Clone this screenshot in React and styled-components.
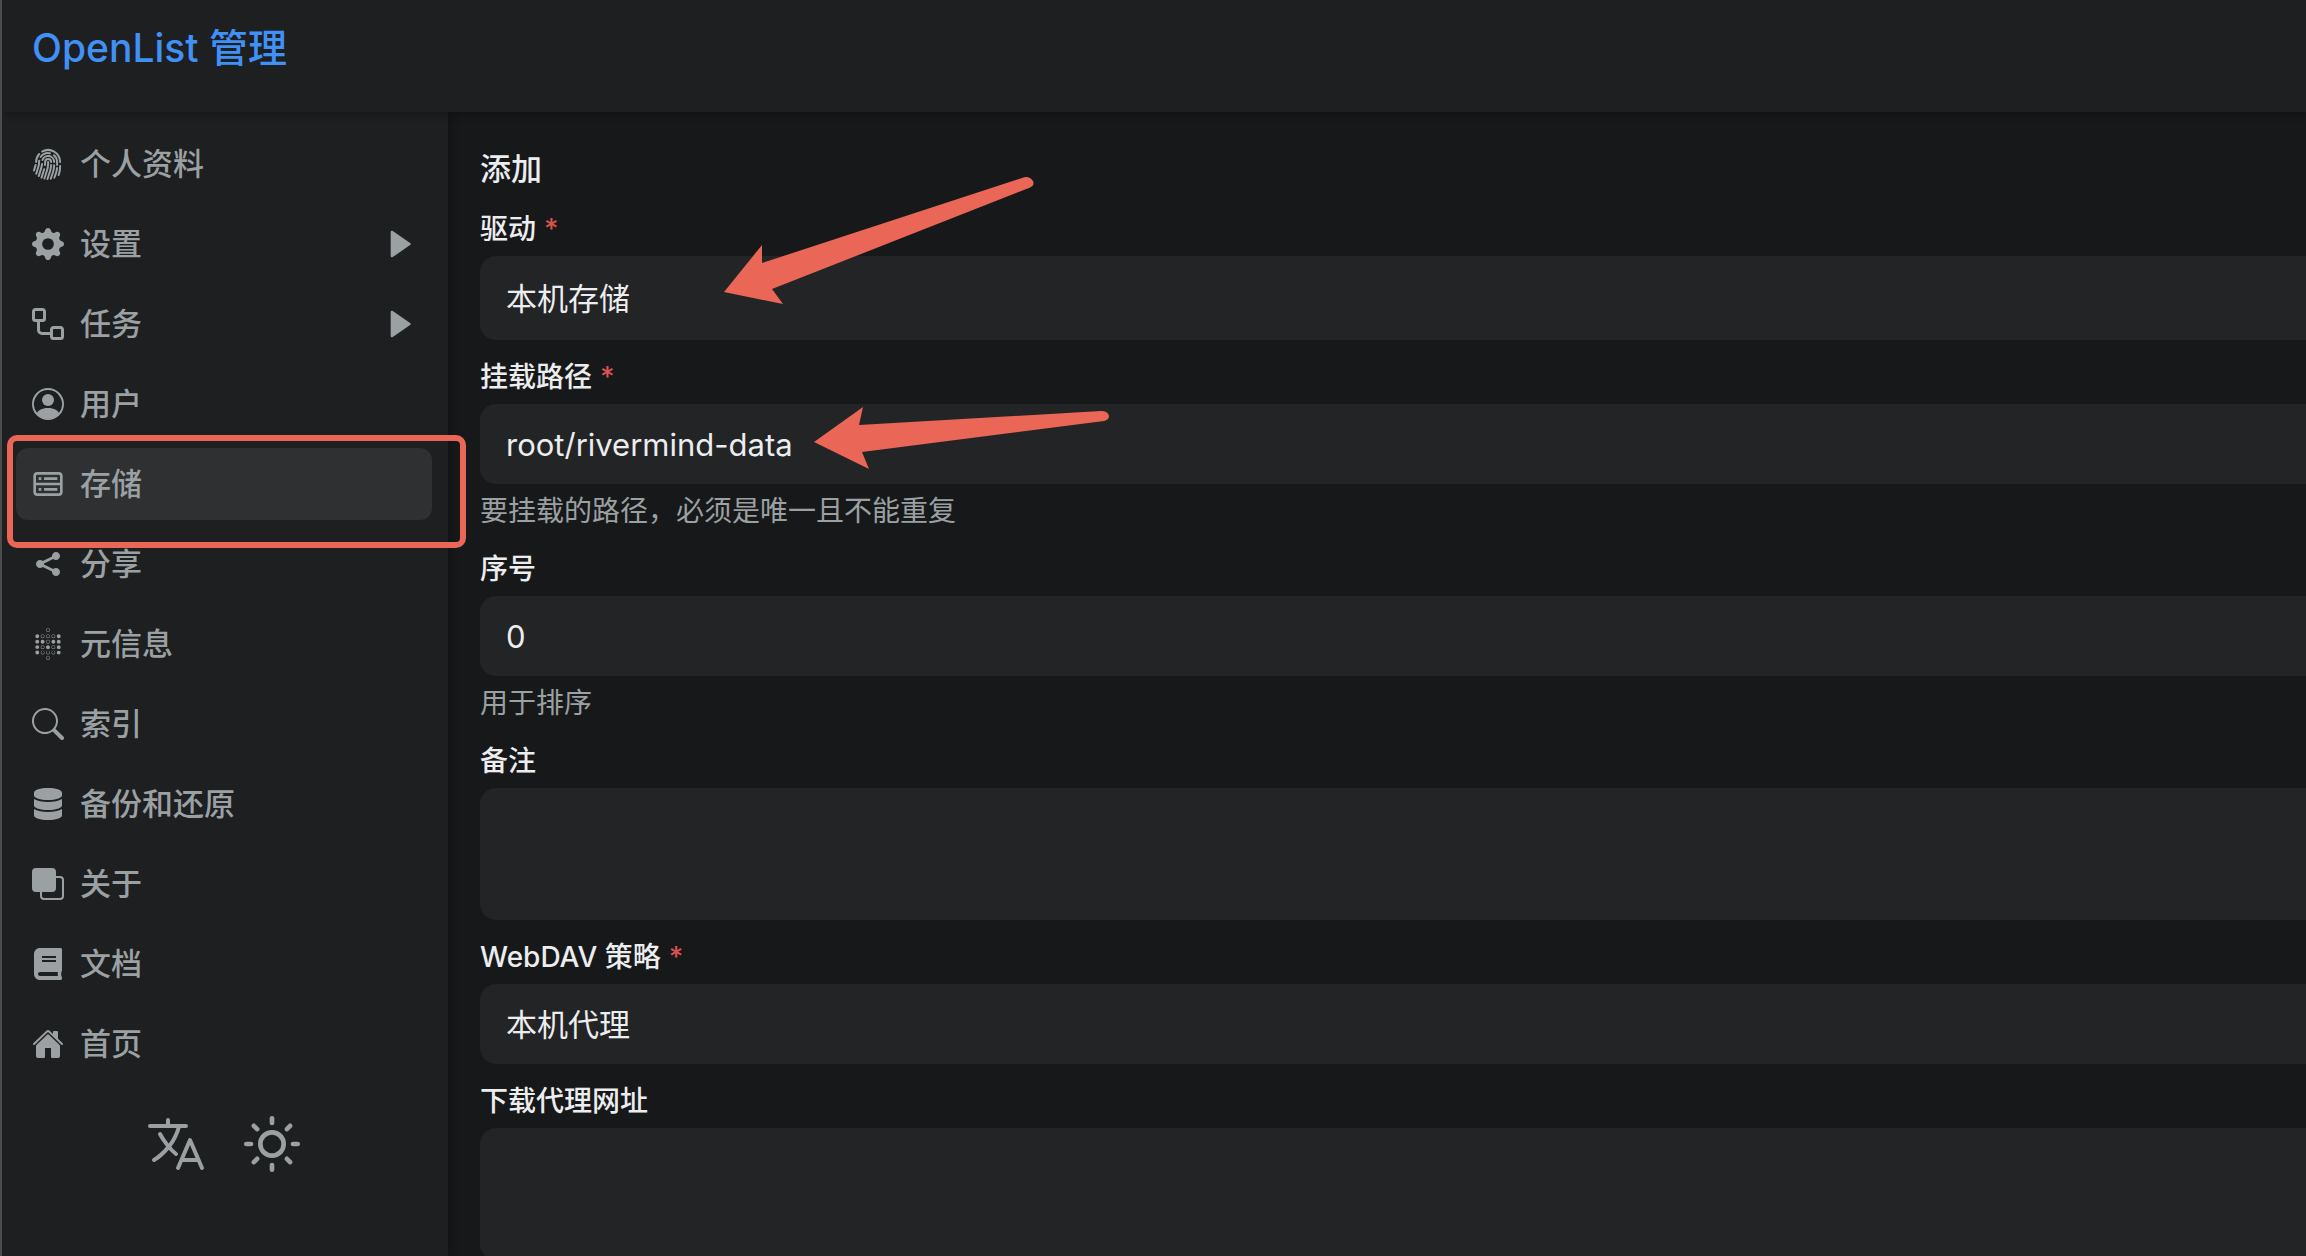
import React from "react";
import styled, { createGlobalStyle, css } from "styled-components";
import { BsFingerprint, BsGearFill, BsPersonCircle, BsSearch, BsFront } from "react-icons/bs";
import { CgShare } from "react-icons/cg";
import { SiMetabase } from "react-icons/si";
import { FaDatabase, FaBook } from "react-icons/fa";
import { IoHome, IoLanguageOutline } from "react-icons/io5";
import { FiSun } from "react-icons/fi";
import { BiSolidRightArrow } from "react-icons/bi";

const colorText = "#ecedee"
const colorMuted = "#9ba0a3"
const colorPanel = "#1d1f21"
const colorField = "#232426"
const colorMark = "#ea6657"
const fieldFontSize = "31px"
const labelFontSize = "28px"

const GlobalStyle = createGlobalStyle`
* {
    box-sizing: border-box;
}

body {
    margin: 0;
    background-color: #17181a;
    color: ${colorText};
    font-family: Inter, "Noto Sans CJK SC", sans-serif;
}
`

const Page = styled.div`
height: 100vh;
display: flex;
flex-direction: column;
overflow: hidden;
border-left: 2px solid #4a4c4e;
`

const Header = styled.header`
position: relative;
z-index: 2;
flex: none;
height: 112px;
padding: 20px 30px;
background-color: ${colorPanel};
box-shadow: 0 2px 8px rgb(0,0,0,0.3);
`

const Title = styled.a`
color: #4190f5;
font-size: 39px;
font-weight: 500;
line-height: 56px;
text-decoration: none;
`

const Body = styled.div`
flex: 1;
display: flex;
min-height: 0;
`

const Sidebar = styled.nav`
position: relative;
z-index: 1;
flex: none;
width: 446px;
padding: 16px 16px 0 14px;
background-color: ${colorPanel};
box-shadow: 2px 0 8px rgb(0,0,0,0.25);
`

const Menu = styled.ul`
display: flex;
flex-direction: column;
gap: 8px;
margin: 0;
padding: 0;
list-style: none;
`

const MenuItem = styled.li`
position: relative;
`

const MenuLink = styled.a`
display: flex;
align-items: center;
gap: 16px;
height: 72px;
padding: 0 16px;
border-radius: 12px;
color: ${colorMuted};
font-size: ${fieldFontSize};
font-weight: 500;
line-height: 40px;
text-decoration: none;

svg {
    flex: none;
    width: 32px;
    height: 32px;
}

${(props) => props.$active && css`
    background-color: #2e3032;
`}
`

const MenuText = styled.span`
flex: 1;
`

// moldura vermelha em volta do item selecionado
const Frame = styled.div`
position: absolute;
top: -13px;
left: -9px;
width: 459px;
height: 113px;
border: 6px solid ${colorMark};
border-radius: 10px;
pointer-events: none;
`

const Tools = styled.div`
display: flex;
justify-content: center;
gap: 32px;
margin-top: 32px;
`

const ToolButton = styled.button`
display: flex;
align-items: center;
justify-content: center;
width: 64px;
height: 64px;
padding: 0;
border: 0;
background: none;
color: ${colorMuted};
cursor: pointer;
`

const Main = styled.main`
flex: 1;
min-width: 0;
padding: 34px 0 0 32px;
`

const Form = styled.form`
display: flex;
flex-direction: column;
gap: 16px;
`

const Heading = styled.h2`
margin: 0;
font-size: ${fieldFontSize};
font-weight: 500;
line-height: 46px;
`

const FieldBox = styled.div`
position: relative;
display: flex;
flex-direction: column;
gap: 6px;
`

const Label = styled.label`
font-size: ${labelFontSize};
font-weight: 500;
line-height: 42px;
`

const Required = styled.span`
margin-left: 8px;
color: #d9534f;
`

const Hint = styled.span`
color: ${colorMuted};
font-size: ${labelFontSize};
line-height: 42px;
`

const fieldStyle = css`
display: block;
width: 100%;
height: ${(props) => props.$height || 80}px;
margin: 0;
padding: 0 26px;
border: 0;
border-radius: 16px 0 0 16px;
outline: 0;
background-color: ${colorField};
color: ${colorText};
font-family: inherit;
font-size: ${fieldFontSize};
appearance: none;
`

const Select = styled.select`
${fieldStyle}
`

const Input = styled.input`
${fieldStyle}
appearance: textfield;
`

const TextArea = styled.textarea`
${fieldStyle}
padding: 16px 26px;
resize: none;
`

const Arrow = styled.svg`
position: absolute;
top: ${(props) => props.$top}px;
left: ${(props) => props.$left}px;
fill: ${colorMark};
pointer-events: none;
`

const WorkflowIcon = () => <svg viewBox="0 0 16 16" fill="currentColor">
    <path d="M0 1.75C0 .784.784 0 1.75 0h3.5C6.216 0 7 .784 7 1.75v3.5A1.75 1.75 0 0 1 5.25 7H4v4a1 1 0 0 0 1 1h4v-1.25C9 9.784 9.784 9 10.75 9h3.5c.966 0 1.75.784 1.75 1.75v3.5A1.75 1.75 0 0 1 14.25 16h-3.5A1.75 1.75 0 0 1 9 14.25v-.75H5A2.5 2.5 0 0 1 2.5 11V7h-.75A1.75 1.75 0 0 1 0 5.25Zm1.75-.25a.25.25 0 0 0-.25.25v3.5c0 .138.112.25.25.25h3.5a.25.25 0 0 0 .25-.25v-3.5a.25.25 0 0 0-.25-.25Zm9 9a.25.25 0 0 0-.25.25v3.5c0 .138.112.25.25.25h3.5a.25.25 0 0 0 .25-.25v-3.5a.25.25 0 0 0-.25-.25Z" />
</svg>

const StorageIcon = () => <svg viewBox="0 0 24 24" fill="currentColor">
    <rect x="2" y="4" width="20" height="16" rx="2" fill="none" stroke="currentColor" strokeWidth="2" />
    <path d="M2 11h20v2H2zM5 7h2v2H5zM9 7h10v2H9zM5 15h2v2H5zM9 15h10v2H9z" />
</svg>

const menu = [
    { text: "个人资料", icon: BsFingerprint },
    { text: "设置", icon: BsGearFill, children: true },
    { text: "任务", icon: WorkflowIcon, children: true },
    { text: "用户", icon: BsPersonCircle },
    { text: "存储", icon: StorageIcon, active: true },
    { text: "分享", icon: CgShare },
    { text: "元信息", icon: SiMetabase },
    { text: "索引", icon: BsSearch },
    { text: "备份和还原", icon: FaDatabase },
    { text: "关于", icon: BsFront },
    { text: "文档", icon: FaBook },
    { text: "首页", icon: IoHome },
]

const Field = (props) => {
    return <FieldBox>
        <Label htmlFor={props.id}>
            {props.label}
            {props.required && <Required>*</Required>}
        </Label>
        {props.children}
        {props.hint && <Hint>{props.hint}</Hint>}
    </FieldBox>
}

const App = () => {

    const menuMap = menu.map((item) => {
        const Icon = item.icon
        return <MenuItem key={item.text}>
            <MenuLink href="#" $active={item.active}>
                <Icon />
                <MenuText>{item.text}</MenuText>
                {item.children && <BiSolidRightArrow />}
            </MenuLink>
            {item.active && <Frame />}
        </MenuItem>
    })

    return <>
        <GlobalStyle />
        <Page>
            <Header>
                <Title href="#">OpenList 管理</Title>
            </Header>
            <Body>
                <Sidebar>
                    <Menu>{menuMap}</Menu>
                    <Tools>
                        <ToolButton type="button" aria-label="语言"><IoLanguageOutline size={64} /></ToolButton>
                        <ToolButton type="button" aria-label="主题"><FiSun size={56} /></ToolButton>
                    </Tools>
                </Sidebar>
                <Main>
                    <Form>
                        <Heading>添加</Heading>
                        <Field id="driver" label="驱动" required>
                            <Select id="driver" $height={84}>
                                <option>本机存储</option>
                            </Select>
                            <Arrow $top={-33} $left={243} width="312" height="130" viewBox="0 0 312 130">
                                <path d="M1 117L39 70V88L299 3Q306 0 310 6Q312 11 306 13L49 114L60 129Z" />
                            </Arrow>
                        </Field>
                        <Field id="mount_path" label="挂载路径" required hint="要挂载的路径，必须是唯一且不能重复">
                            <Input id="mount_path" defaultValue="root/rivermind-data" />
                            <Arrow $top={50} $left={334} width="296" height="64" viewBox="0 0 296 64">
                                <path d="M0 36L49 1L45 19L287 5Q294 5 295 10Q295 14 290 15L48 46L55 63Z" />
                            </Arrow>
                        </Field>
                        <Field id="order" label="序号" hint="用于排序">
                            <Input id="order" type="number" defaultValue="0" />
                        </Field>
                        <Field id="remark" label="备注">
                            <TextArea id="remark" $height={132} />
                        </Field>
                        <Field id="webdav_policy" label="WebDAV 策略" required>
                            <Select id="webdav_policy">
                                <option>本机代理</option>
                            </Select>
                        </Field>
                        <Field id="down_proxy_url" label="下载代理网址">
                            <TextArea id="down_proxy_url" $height={132} />
                        </Field>
                    </Form>
                </Main>
            </Body>
        </Page>
    </>
}

export default App
